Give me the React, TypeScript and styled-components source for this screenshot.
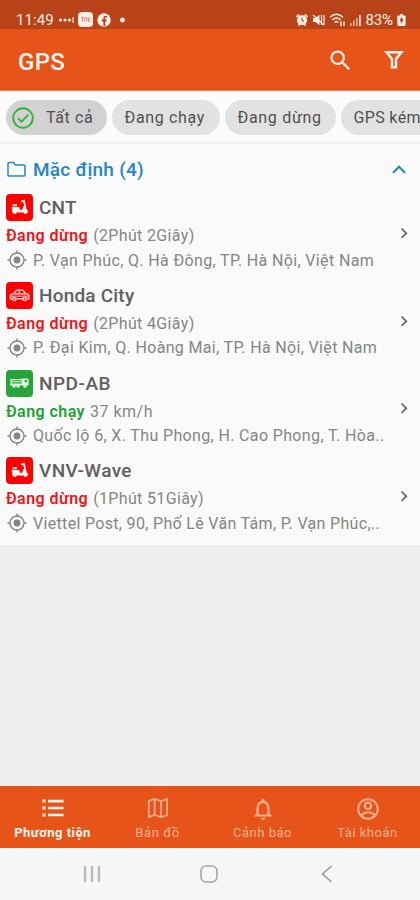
import React from "react";
import styled, { createGlobalStyle } from "styled-components";
import { MdSearch, MdNotificationsNone } from "react-icons/md";
import { RiAccountCircleLine } from "react-icons/ri";

const Global = createGlobalStyle`
  * { box-sizing: border-box; }
  body { margin: 0; background: #eeeeee; font-family: Roboto, "Noto Sans", sans-serif; }
  svg { display: block; flex: none; }
`;

const Screen = styled.div`
  width: 420px;
  height: 900px;
  display: flex;
  flex-direction: column;
  overflow: hidden;
  background: #eeeeee;
`;

const StatusBar = styled.div`
  height: 29px;
  flex: none;
  display: flex;
  align-items: center;
  justify-content: space-between;
  padding: 10px 14px 0 16px;
  background: #b84318;
  color: #ffeee6;
`;
const StatusGroup = styled.div<{ $gap: number }>`
  display: flex;
  align-items: center;
  gap: ${(p) => p.$gap}px;
`;
const StatusText = styled.span<{ $spacing?: number }>`
  font-size: 15px;
  line-height: 20px;
  letter-spacing: ${(p) => p.$spacing ?? 0}px;
`;

const Header = styled.header`
  height: 62px;
  flex: none;
  display: flex;
  align-items: center;
  padding: 1px 14px 0 18px;
  background: #e75419;
  border-bottom: 1px solid #f17f55;
  color: #fff4ee;
`;
const Title = styled.h1`
  margin: 3px auto 0 0;
  font-size: 24px;
  font-weight: 500;
  letter-spacing: 0.3px;
`;
const HeaderActions = styled.div`
  display: flex;
  align-items: center;
  gap: 28px;
`;

const Chips = styled.div`
  height: 53px;
  flex: none;
  display: flex;
  gap: 5px;
  padding: 9px 0 0 6px;
  background: #fbfbfb;
  border-bottom: 2px solid #f2f2f2;
  overflow: hidden;
`;
const Chip = styled.div<{ $width: number; $active?: boolean; $spacing: number }>`
  flex: none;
  width: ${(p) => p.$width}px;
  height: 35px;
  border-radius: 18px;
  display: flex;
  align-items: center;
  gap: 12px;
  padding-left: ${(p) => (p.$active ? 6 : 12.5)}px;
  background: ${(p) => (p.$active ? "#d2d2d2" : "#e2e2e2")};
  color: #505050;
  font-size: 16px;
  letter-spacing: ${(p) => p.$spacing}px;
  white-space: nowrap;
`;

const List = styled.main`
  height: 401px;
  flex: none;
  background: #fafafa;
`;
const GroupHeader = styled.div`
  height: 50px;
  display: flex;
  align-items: center;
  padding: 0 14px 0 7px;
  color: #2585c7;
`;
const GroupTitle = styled.span`
  margin: 0 auto 0 7px;
  font-size: 19px;
  font-weight: 500;
  letter-spacing: 0.25px;
`;

const Row = styled.div`
  height: 87.8px;
  display: flex;
  align-items: center;
  justify-content: space-between;
  padding-right: 11px;
  color: #606060;
`;
const RowBody = styled.div`
  align-self: stretch;
  padding-left: 6px;
`;
const RowTitle = styled.div<{ $spacing: number }>`
  display: flex;
  align-items: center;
  gap: 7px;
  height: 27px;
  font-size: 19px;
  font-weight: 500;
  letter-spacing: ${(p) => p.$spacing}px;
`;
const Badge = styled.div<{ $color: string }>`
  width: 27px;
  height: 27px;
  margin-right: -1px;
  border-radius: 4px;
  display: grid;
  place-items: center;
  background: ${(p) => p.$color};
`;
const Status = styled.div`
  display: flex;
  gap: 5px;
  height: 29px;
  line-height: 30px;
  font-size: 16px;
  color: #858585;
  white-space: nowrap;
`;
const State = styled.span<{ $color: string; $spacing: number }>`
  color: ${(p) => p.$color};
  font-weight: 600;
  letter-spacing: ${(p) => p.$spacing}px;
`;
const Detail = styled.span<{ $spacing: number }>`
  letter-spacing: ${(p) => p.$spacing}px;
`;
const Address = styled.div<{ $spacing: number }>`
  display: flex;
  align-items: center;
  gap: 6px;
  height: 20px;
  padding-left: 1px;
  font-size: 16px;
  color: #858585;
  letter-spacing: ${(p) => p.$spacing}px;
  white-space: nowrap;
`;
const RowArrow = styled.div`
  padding-bottom: 10px;
`;

const Tabs = styled.nav`
  height: 62px;
  flex: none;
  margin-top: auto;
  display: grid;
  grid-template-columns: repeat(4, 1fr);
  background: #e75419;
`;
const Tab = styled.div<{ $active?: boolean; $spacing: number }>`
  display: flex;
  flex-direction: column;
  align-items: center;
  padding-top: 10px;
  gap: 3px;
  color: ${(p) => (p.$active ? "#fff5ef" : "#f9b092")};
  font-size: 13px;
  line-height: 20px;
  font-weight: ${(p) => (p.$active ? 700 : 400)};
  letter-spacing: ${(p) => p.$spacing}px;
`;
const TabIcon = styled.div`
  height: 24px;
  display: grid;
  place-items: center;
`;
const SystemBar = styled.div`
  height: 52px;
  flex: none;
  display: grid;
  grid-template-columns: repeat(3, 117.5px);
  place-items: center;
  padding-left: 33px;
  background: #f6f6f6;
`;

const Scooter = () => (
  <svg width="21" height="19" viewBox="0 0 21 19">
    <path d="M12.2 3.6 15 2.6l.6 3.2 1.4 6.6" fill="none" stroke="#fff3f0" strokeWidth="1.8" />
    <path d="M2.8 9h7.4l.8 2.8h2l1.4-3.6 2-.3.9 3.8 1.6.6.3 2.2H3V12l.7-1H2.8z" fill="#fff3f0" />
    <path d="M3.6 6h4.4v2.3H3.6z" fill="#ffd0ca" />
    <circle cx="5.8" cy="14" r="1.9" fill="#fff3f0" />
    <circle cx="16.4" cy="14" r="1.9" fill="#fff3f0" />
  </svg>
);
const Car = () => (
  <svg width="21" height="14" viewBox="0 0 21 14" fill="none" stroke="#ffc6c0" strokeWidth="1.5">
    <path d="M3.5 10.8H1.4V7.6q.2-1.7 3.2-1.9l2.2-2.6Q7.5 2 9 2h3q2 0 3 1.4l1.6 2.3q3 .2 3.2 1.9v3.2h-2M7 10.8h7M4.6 5.7h12M10.3 2.4v3.2" />
    <path d="M2 8.2h17" strokeWidth="1" />
    <circle cx="5.2" cy="11" r="1.6" />
    <circle cx="15.7" cy="11" r="1.6" />
  </svg>
);
const Truck = () => (
  <svg width="21" height="14" viewBox="0 0 21 14">
    <path d="M1 3h11.5v1.3H1zM1.6 4h1.2v4H1.6zM1 7.4h11.5v2H1zM3 5.2h9.5v1H3z" fill="#d7f3d9" />
    <path d="M12.5 2.4h5.6q1.5 0 1.5 1.5v5.6h-7.1z" fill="#e6f8e6" />
    <path d="M15.6 3.9h2.4v2.2h-2.4z" fill="#27a53a" />
    <circle cx="5" cy="10" r="1.7" fill="#e6f8e6" />
    <circle cx="9" cy="10" r="1.7" fill="#e6f8e6" />
    <circle cx="16" cy="10" r="1.8" fill="#e6f8e6" />
  </svg>
);
const Locate = () => (
  <svg width="20" height="20" viewBox="0 0 20 20" fill="none" stroke="#858585" strokeWidth="1.4">
    <circle cx="10" cy="10" r="7" />
    <path d="M10 .5V3M10 17v2.5M.5 10H3M17 10h2.5" />
    <circle cx="10" cy="10" r="3.4" fill="#858585" stroke="none" />
  </svg>
);

const RED = "#ff0000";
const RED_TEXT = "#ed1519";
const GREEN = "#27a53a";

const vehicles = [
  { name: "CNT", ns: 0.2, icon: <Scooter />, color: RED, text: RED_TEXT, state: "Đang dừng", ss: 0.45, detail: "(2Phút 2Giây)", ds: 0.35, address: "P. Vạn Phúc, Q. Hà Đông, TP. Hà Nội, Việt Nam", as: 0.36 },
  { name: "Honda City", ns: 0.2, icon: <Car />, color: RED, text: RED_TEXT, state: "Đang dừng", ss: 0.45, detail: "(2Phút 4Giây)", ds: 0.35, address: "P. Đại Kim, Q. Hoàng Mai, TP. Hà Nội, Việt Nam", as: 0.34 },
  { name: "NPD-AB", ns: 0.5, icon: <Truck />, color: GREEN, text: "#20a334", state: "Đang chạy", ss: 0.45, detail: "37 km/h", ds: 0.5, address: "Quốc lộ 6, X. Thu Phong, H. Cao Phong, T. Hòa..", as: 0.36 },
  { name: "VNV-Wave", ns: 0.4, icon: <Scooter />, color: RED, text: RED_TEXT, state: "Đang dừng", ss: 0.45, detail: "(1Phút 51Giây)", ds: 0.35, address: "Viettel Post, 90, Phố Lê Văn Tám, P. Vạn Phúc,..", as: 0.32 },
];

export default function App() {
  return (
    <>
      <Global />
      <Screen>
        <StatusBar>
          <StatusGroup $gap={4}>
            <StatusText $spacing={0.1}>11:49</StatusText>
            <svg width="16" height="10" viewBox="0 0 16 10" fill="currentColor">
              <circle cx="2.5" cy="5" r="1.6" /><circle cx="7" cy="5" r="1.6" /><circle cx="11.5" cy="5" r="1.6" />
              <path d="M14.5 2h1.2v6h-1.2z" />
            </svg>
            <svg width="15" height="15" viewBox="0 0 15 15">
              <rect width="15" height="15" rx="4" fill="#ffeee6" />
              <path d="M3 5.5h3M4.5 5.5v4M7 9.5V6h2v3.5M12.5 6h-2v3.3h2" fill="none" stroke="#d5886a" />
            </svg>
            <svg width="14" height="14" viewBox="0 0 14 14">
              <circle cx="7" cy="7" r="6.7" fill="#ffeee6" />
              <path d="M10 3.6H8.8q-1.5 0-1.5 1.6V13M4.8 7.5h4.8" fill="none" stroke="#b84318" strokeWidth="1.8" />
            </svg>
            <svg width="14" height="6" viewBox="0 0 14 6"><circle cx="7.5" cy="3" r="2.4" fill="#ffeee6" /></svg>
          </StatusGroup>
          <StatusGroup $gap={4}>
            <svg width="12" height="12" viewBox="0 0 12 12">
              <path d="m.5 3 2.7-2.5M11.5 3 8.8.5M2.5 11.5l1-1.5M9.5 11.5 8.5 10" stroke="#ffeee6" strokeWidth="1.8" />
              <circle cx="6" cy="6.2" r="5" fill="#ffeee6" />
              <path d="M6 3.5v3l2 1" fill="none" stroke="#b84318" strokeWidth="1.1" />
            </svg>
            <svg width="13" height="12" viewBox="0 0 13 12" fill="#ffeee6">
              <path d="M1 4h2.5L7.5.8v10.4L3.5 8H1z" />
              <path d="M9.5 1v10M12 1v10M1 1l10.5 10" stroke="#ffeee6" strokeWidth="1.2" />
            </svg>
            <svg width="17" height="14" viewBox="0 0 17 14" fill="none" stroke="currentColor" strokeWidth="1.5">
              <path d="M1 4.2q6.5-6 13 0M3.3 7q4.2-4 8.4 0M5.7 9.5q1.8-2 3.6 0" />
              <path d="m7.5 11.8.1.1M12 13V8.5M15 8.5V13" />
            </svg>
            <svg width="11" height="12" viewBox="0 0 11 12" fill="currentColor">
              <path opacity=".6" d="M0 9h1.7v3H0zM3 6.5h1.7V12H3zM6 4h1.7v8H6z" /><path d="M9 1h1.7v11H9z" />
            </svg>
            <StatusText $spacing={-0.1}>83%</StatusText>
            <svg width="9" height="12" viewBox="0 0 9 13">
              <path d="M3 0h3v1.5h2Q9 1.5 9 3v8.5Q9 13 7.5 13h-6Q0 13 0 11.5V3q0-1.5 1-1.5h2z" fill="#ffeee6" />
              <path d="M5 3.5 2.8 7h1.5L4 10l2.5-3.8H5z" fill="#9b3d1f" stroke="#9b3d1f" strokeWidth=".6" />
            </svg>
          </StatusGroup>
        </StatusBar>

        <Header>
          <Title>GPS</Title>
          <HeaderActions>
            <MdSearch size={27} />
            <svg width="24" height="24" viewBox="0 0 24 24" fill="none" stroke="currentColor" strokeWidth="2.4">
              <path d="M4.5 4.2h15L14 11v8.2h-4V11z" />
            </svg>
          </HeaderActions>
        </Header>

        <Chips>
          <Chip $width={101} $active $spacing={0.6}>
            <svg width="22" height="22" viewBox="0 0 22 22" fill="none" stroke="#39b23c" strokeWidth="1.9">
              <circle cx="11" cy="11" r="9.8" /><path d="m6 11.3 3.6 3.4 6.8-7" />
            </svg>
            Tất cả
          </Chip>
          <Chip $width={108} $spacing={0.65}>Đang chạy</Chip>
          <Chip $width={111} $spacing={0.7}>Đang dừng</Chip>
          <Chip $width={100} $spacing={0.35}>GPS kém</Chip>
        </Chips>

        <List>
          <GroupHeader>
            <svg width="19" height="17" viewBox="0 0 19 17" fill="none" stroke="currentColor" strokeWidth="1.5">
              <path d="M1 14V2.7Q1 1.5 2.2 1.5h4.3l2 2.4H17q1 0 1 1.1v9q0 1-1 1H2q-1 0-1-1z" />
            </svg>
            <GroupTitle>Mặc định (4)</GroupTitle>
            <svg width="14" height="9" viewBox="0 0 14 9" fill="none" stroke="currentColor" strokeWidth="2">
              <path d="m1 7.7 6-6 6 6" />
            </svg>
          </GroupHeader>
          {vehicles.map((v) => (
            <Row key={v.name}>
              <RowBody>
                <RowTitle $spacing={v.ns}><Badge $color={v.color}>{v.icon}</Badge>{v.name}</RowTitle>
                <Status>
                  <State $color={v.text} $spacing={v.ss}>{v.state}</State>
                  <Detail $spacing={v.ds}>{v.detail}</Detail>
                </Status>
                <Address $spacing={v.as}><Locate />{v.address}</Address>
              </RowBody>
              <RowArrow>
                <svg width="10" height="12" viewBox="0 0 10 12" fill="none" stroke="currentColor" strokeWidth="1.7">
                  <path d="m2.5 1.5 4.8 4.7L2.5 11" />
                </svg>
              </RowArrow>
            </Row>
          ))}
        </List>

        <Tabs>
          <Tab $active $spacing={0.5}>
            <TabIcon>
              <svg width="22" height="18" viewBox="0 0 22 18" fill="currentColor">
                <path d="M.5.5h3v3h-3zM.5 7.5h3v3h-3zM.5 14.5h3v3h-3zM6 .8h15.5v2.6H6zM6 7.7h15.5v2.6H6zM6 14.7h15.5v2.6H6z" />
              </svg>
            </TabIcon>Phương tiện
          </Tab>
          <Tab $spacing={0.6}>
            <TabIcon>
              <svg width="22" height="22" viewBox="0 0 22 22" fill="none" stroke="currentColor" strokeWidth="1.7">
                <path d="m1.8 4 5.8-2 6.5 2 6-2v16.2l-6 1.8-6.5-2-5.8 2zM7.6 2v16M14.1 4v16" />
              </svg>
            </TabIcon>Bản đồ
          </Tab>
          <Tab $spacing={0.5}><TabIcon><MdNotificationsNone size={26} /></TabIcon>Cảnh báo</Tab>
          <Tab $spacing={0.5}><TabIcon><RiAccountCircleLine size={26} /></TabIcon>Tài khoản</Tab>
        </Tabs>

        <SystemBar>
          <svg width="20" height="18" viewBox="0 0 20 18" stroke="#b9b9b9" strokeWidth="2.3">
            <path d="M3 1v16M10 1v16M17 1v16" />
          </svg>
          <svg width="18" height="18" viewBox="0 0 18 18" fill="none" stroke="#a5a5a5" strokeWidth="1.6">
            <rect x="1" y="1" width="16" height="16" rx="5" />
          </svg>
          <svg width="12" height="18" viewBox="0 0 12 18" fill="none" stroke="#999" strokeWidth="1.6">
            <path d="m10.5 1-9 8 9 8" />
          </svg>
        </SystemBar>
      </Screen>
    </>
  );
}
